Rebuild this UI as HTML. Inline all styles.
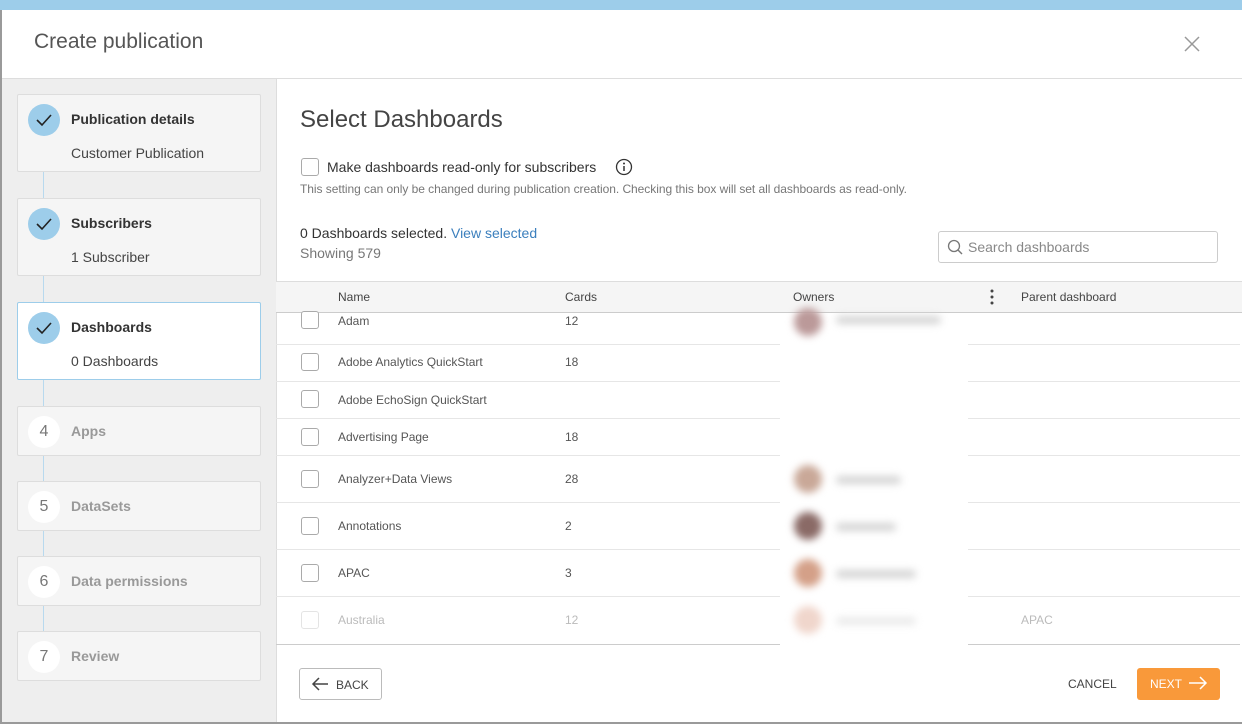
<!DOCTYPE html>
<html><head><style>
*{box-sizing:border-box;margin:0;padding:0}
html,body{width:1242px;height:724px;overflow:hidden}
body{font-family:"Liberation Sans",sans-serif;background:#9a9a9a;position:relative;color:#333}
.top{position:absolute;left:0;top:0;width:1242px;height:10px;background:#9dcdea}
.modal{position:absolute;left:2px;top:10px;width:1240px;height:712px;background:#fff;overflow:hidden}
.hdr{position:absolute;left:0;top:0;width:1240px;height:69px;border-bottom:1px solid #ddd}
.hdr h1{position:absolute;left:32px;top:20px;font-size:21px;font-weight:normal;color:#555}
.x{position:absolute;left:1180px;top:24px;width:20px;height:20px}
.side{position:absolute;left:0;top:69px;width:275px;height:645px;background:#eee;border-right:1px solid #ddd}
.vl{position:absolute;left:41px;top:93px;width:1px;height:500px;background:#b8d9ee}
.step{position:absolute;left:15px;width:244px;background:#f5f5f5;border:1px solid #ddd;border-radius:2px}
.step.act{background:#fff;border-color:#9dcdea}
.chk{position:absolute;left:10px;top:9px;width:32px;height:32px;border-radius:50%;background:#9dcdea}
.num{position:absolute;left:10px;top:9px;width:32px;height:32px;border-radius:50%;background:#fff;color:#777;font-size:16px;text-align:center;line-height:32px}
.t{position:absolute;left:53px;top:16px;font-size:14px;font-weight:bold;color:#333}
.s{position:absolute;left:53px;top:50px;font-size:14px;color:#444}
.dis .t{color:#999}
.a{position:absolute;white-space:nowrap}
.cb{position:absolute;width:18px;height:18px;border:1px solid #aaa;border-radius:3px;background:#fff}
.row{position:absolute;left:276px;width:964px;border-bottom:1px solid #e6e6e6;font-size:12px;color:#555}
.av{position:absolute;width:28px;height:28px;border-radius:50%;filter:blur(4px)}
.bar{position:absolute;height:8px;border-radius:4px;background:#d4d4d4;filter:blur(4px)}
</style></head><body>
<div class="top"></div>
<div class="modal">
<div class="hdr"><h1>Create publication</h1>
<svg class="x" viewBox="0 0 20 20"><path d="M3 3L17 17M17 3L3 17" stroke="#999" stroke-width="1.5"/></svg></div>
<div class="side">
<div class="vl"></div>
<div class="step" style="top:15px;height:78px"><div class="chk"><svg width="32" height="32"><path d="M9 16l5 5 9-10" stroke="#222" stroke-width="1.6" fill="none"/></svg></div><div class="t">Publication details</div><div class="s">Customer Publication</div></div>
<div class="step" style="top:119px;height:78px"><div class="chk"><svg width="32" height="32"><path d="M9 16l5 5 9-10" stroke="#222" stroke-width="1.6" fill="none"/></svg></div><div class="t">Subscribers</div><div class="s">1 Subscriber</div></div>
<div class="step act" style="top:223px;height:78px"><div class="chk"><svg width="32" height="32"><path d="M9 16l5 5 9-10" stroke="#222" stroke-width="1.6" fill="none"/></svg></div><div class="t">Dashboards</div><div class="s">0 Dashboards</div></div>
<div class="step dis" style="top:327px;height:50px"><div class="num">4</div><div class="t">Apps</div></div>
<div class="step dis" style="top:402px;height:50px"><div class="num">5</div><div class="t">DataSets</div></div>
<div class="step dis" style="top:477px;height:50px"><div class="num">6</div><div class="t">Data permissions</div></div>
<div class="step dis" style="top:552px;height:50px"><div class="num">7</div><div class="t">Review</div></div>
</div>
</div>
<div class="a" style="left:300px;top:106px;font-size:24px;color:#444">Select Dashboards</div>
<div class="cb" style="left:301px;top:158px"></div>
<div class="a" style="left:327px;top:159px;font-size:14px;color:#333">Make dashboards read-only for subscribers</div>
<svg class="a" style="left:615px;top:158px" width="18" height="18"><circle cx="9" cy="9" r="7.5" stroke="#333" stroke-width="1.3" fill="none"/><path d="M9 8v5" stroke="#333" stroke-width="1.5"/><circle cx="9" cy="5.5" r="1" fill="#333"/></svg>
<div class="a" style="left:300px;top:182px;font-size:12px;color:#777;letter-spacing:-0.05px">This setting can only be changed during publication creation. Checking this box will set all dashboards as read-only.</div>
<div class="a" style="left:300px;top:225px;font-size:14px;color:#333">0 Dashboards selected. <span style="color:#3b7fbd">View selected</span></div>
<div class="a" style="left:300px;top:245px;font-size:14px;color:#777">Showing 579</div>
<div class="a" style="left:938px;top:231px;width:280px;height:32px;border:1px solid #ccc;border-radius:3px"></div>
<svg class="a" style="left:946px;top:238px" width="18" height="18"><circle cx="8" cy="8" r="5.5" stroke="#777" stroke-width="1.3" fill="none"/><path d="M12 12l4 4" stroke="#777" stroke-width="1.4"/></svg>
<div class="a" style="left:968px;top:239px;font-size:14px;color:#888">Search dashboards</div>
<div class="a" style="left:276px;top:281px;width:966px;height:32px;background:#f5f5f5;border-top:1px solid #ddd;border-bottom:1px solid #ccc;font-size:12px;color:#444">
<span class="a" style="left:62px;top:8px">Name</span><span class="a" style="left:289px;top:8px">Cards</span><span class="a" style="left:517px;top:8px">Owners</span><span class="a" style="left:745px;top:8px">Parent dashboard</span>
<svg class="a" style="left:713px;top:6px" width="6" height="18"><circle cx="3" cy="3" r="1.5" fill="#444"/><circle cx="3" cy="9" r="1.5" fill="#444"/><circle cx="3" cy="15" r="1.5" fill="#444"/></svg></div>
<div class="row" style="top:313px;height:32px"><div class="cb" style="left:25px;top:-2px"></div><span class="a" style="left:62px;top:1px">Adam</span><span class="a" style="left:289px;top:1px">12</span></div>
<div class="row" style="top:345px;height:37px"><div class="cb" style="left:25px;top:8px"></div><span class="a" style="left:62px;top:10px">Adobe Analytics QuickStart</span><span class="a" style="left:289px;top:10px">18</span></div>
<div class="row" style="top:382px;height:37px"><div class="cb" style="left:25px;top:8px"></div><span class="a" style="left:62px;top:11px">Adobe EchoSign QuickStart</span></div>
<div class="row" style="top:419px;height:37px"><div class="cb" style="left:25px;top:9px"></div><span class="a" style="left:62px;top:11px">Advertising Page</span><span class="a" style="left:289px;top:11px">18</span></div>
<div class="row" style="top:456px;height:47px"><div class="cb" style="left:25px;top:14px"></div><span class="a" style="left:62px;top:16px">Analyzer+Data Views</span><span class="a" style="left:289px;top:16px">28</span></div>
<div class="row" style="top:503px;height:47px"><div class="cb" style="left:25px;top:14px"></div><span class="a" style="left:62px;top:16px">Annotations</span><span class="a" style="left:289px;top:16px">2</span></div>
<div class="row" style="top:550px;height:47px"><div class="cb" style="left:25px;top:14px"></div><span class="a" style="left:62px;top:16px">APAC</span><span class="a" style="left:289px;top:16px">3</span></div>
<div class="row" style="top:597px;height:48px;color:#bbb;border-bottom-color:#ccc"><div class="cb" style="left:25px;top:14px;border-color:#e4e4e4"></div><span class="a" style="left:62px;top:16px">Australia</span><span class="a" style="left:289px;top:16px">12</span><span class="a" style="left:745px;top:16px">APAC</span></div>
<div class="a" style="left:780px;top:313px;width:188px;height:332px;background:#fff"></div>
<div class="av" style="left:794px;top:308px;background:#b99"></div><div class="bar" style="left:836px;top:316px;width:105px"></div>
<div class="av" style="left:794px;top:465px;background:#c9a898"></div><div class="bar" style="left:836px;top:476px;width:65px"></div>
<div class="av" style="left:794px;top:512px;background:#8a6a66"></div><div class="bar" style="left:836px;top:523px;width:60px"></div>
<div class="av" style="left:794px;top:559px;background:#d4a088"></div><div class="bar" style="left:836px;top:570px;width:80px"></div>
<div class="av" style="left:794px;top:606px;background:#f0d6cc"></div><div class="bar" style="left:836px;top:617px;width:80px;background:#eaeaea"></div>
<div class="a" style="left:299px;top:668px;width:83px;height:32px;border:1px solid #bbb;border-radius:3px;font-size:12px;color:#444">
<svg class="a" style="left:10px;top:7px" width="20" height="16"><path d="M18 8H3M9 2L3 8l6 6" stroke="#444" stroke-width="1.5" fill="none"/></svg><span class="a" style="left:36px;top:9px">BACK</span></div>
<div class="a" style="left:1068px;top:677px;font-size:12px;color:#444">CANCEL</div>
<div class="a" style="left:1137px;top:668px;width:83px;height:32px;background:#f9993a;border-radius:3px;font-size:12px;color:#fff">
<span class="a" style="left:13px;top:9px">NEXT</span><svg class="a" style="left:50px;top:7px" width="22" height="16"><path d="M2 8h17M13 2l6 6-6 6" stroke="#fff" stroke-width="1.5" fill="none"/></svg></div>
</body></html>
